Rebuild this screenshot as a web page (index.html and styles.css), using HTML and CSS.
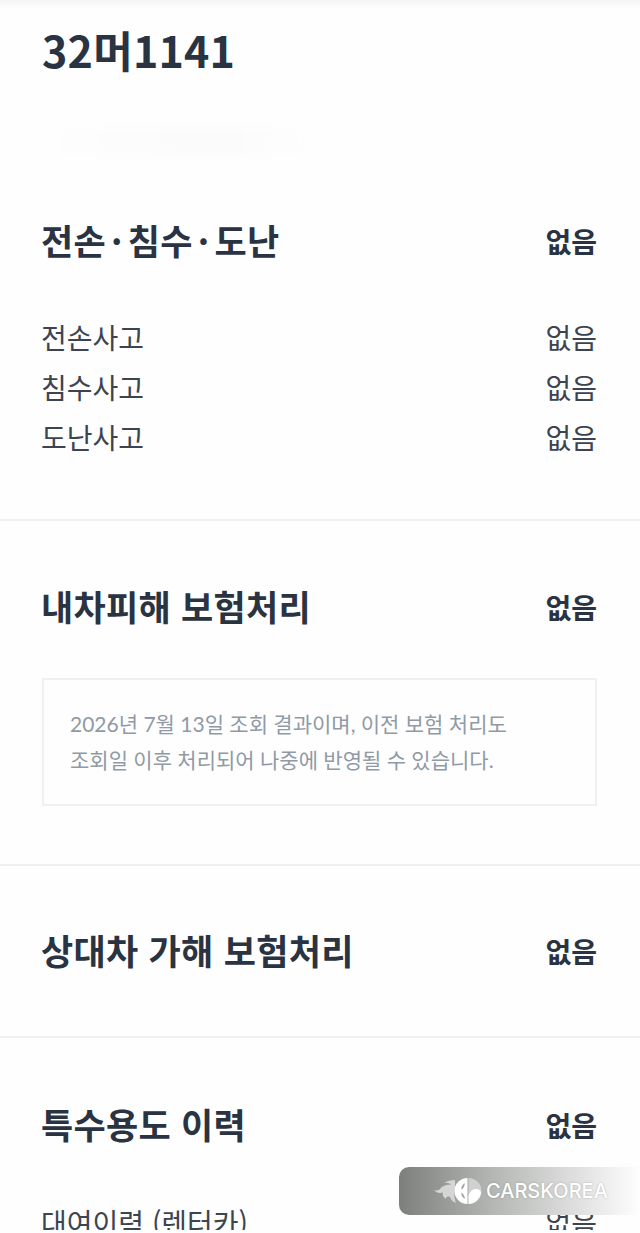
FILE: index.html
```html
<!DOCTYPE html>
<html lang="ko">

<head>
    <meta charset="UTF-8">
    <meta name="viewport" content="width=device-width, initial-scale=1.0">
    <title>32머1141</title>
    <link rel="stylesheet" href="styles.css">
</head>

<body>
    <div class="page">
        <div class="top-smudge"></div>
        <header class="head">
            <h1 class="plate">32머1141</h1>
            <div class="smudge"></div>
        </header>

        <section class="block block-first">
            <div class="block-head">
                <h2>전손<span class="dot">·</span>침수<span class="dot">·</span>도난</h2>
                <strong>없음</strong>
            </div>
            <ul class="rows">
                <li><span>전손사고</span><span>없음</span></li>
                <li><span>침수사고</span><span>없음</span></li>
                <li><span>도난사고</span><span>없음</span></li>
            </ul>
        </section>

        <section class="block block-own">
            <div class="block-head">
                <h2>내차피해 보험처리</h2>
                <strong>없음</strong>
            </div>
            <div class="note">
                <p>2026년 7월 13일 조회 결과이며, 이전 보험 처리도</p>
                <p>조회일 이후 처리되어 나중에 반영될 수 있습니다.</p>
            </div>
        </section>

        <section class="block block-other">
            <div class="block-head">
                <h2>상대차 가해 보험처리</h2>
                <strong>없음</strong>
            </div>
        </section>

        <section class="block block-special">
            <div class="block-head">
                <h2>특수용도 이력</h2>
                <strong>없음</strong>
            </div>
            <ul class="rows">
                <li><span>대여이력 (렌터카)</span><span>없음</span></li>
            </ul>
        </section>

        <div class="mark">
            <svg class="mark-logo" width="50" height="30" viewBox="0 0 50 30">
                <path class="flame" d="M21 4C17 4 13 5 10 7c4-.5 6 .5 7 2-4-1-9 1-11 4-1 1.500-4 2-6 1 2 3 6 3.500 9 2.500-1 2 0 4.500 3 6.500 0-2.500 2-3 4-2 1 3 3 5 6 6-2-5-2-9-1-15 0-3 0-6 0-8z" />
                <path class="disc" fill-rule="evenodd" d="M33.500 2a13 13 0 0 0 0 26zM31 7c-3 2-4 4-3.500 6.500 1.500-1 3-2.500 3.500-6.500zM31 23c-3-2-4-4-3.500-6.500 1.500 1 3 2.500 3.500 6.500z" />
                <path class="disc-back" d="M34.500 2a13 13 0 0 1 0 26z" />
                <path class="disc" d="M34.500 20c1-4 4-7 7-7s5.500 1.500 5.500 4c-1 6-6 10.500-12.500 11z" />
            </svg>
            <span class="mark-name">CARSKOREA</span>
        </div>
    </div>
</body>

</html>
```

FILE: styles.css
```css
* {
    margin: 0;
    padding: 0;
    box-sizing: border-box;
}

html,
body {
    height: 100%;
    background-color: #fefefe;
}

body {
    overflow: hidden;
    font-family: "Noto Sans CJK KR", "Noto Sans", sans-serif;
    color: #2a3342;
}

ul {
    list-style: none;
}

.page {
    position: relative;
    width: 640px;
    height: 1230px;
    overflow: hidden;
}

.top-smudge {
    position: absolute;
    top: 0;
    left: 0;
    width: 100%;
    height: 9px;
    background: linear-gradient(#f4f5f5, #fefefe);
}

.head {
    height: 176px;
    padding: 21px 42px 0;
}

.plate {
    font-size: 43px;
    line-height: 56px;
    font-weight: 700;
    letter-spacing: 0.2px;
}

.smudge {
    width: 270px;
    height: 26px;
    margin-top: 52px;
    background: linear-gradient(90deg, #fefefe, #fcfcfc 30%, #fbfbfb 70%, #fefefe);
    filter: blur(4px);
}

.block {
    padding: 60px 43px 58px 41px;
    border-top: 2px solid #eef0f1;
}

.block-first {
    padding-top: 39px;
    padding-bottom: 57px;
    border-top: 0;
}

.block-other {
    padding-top: 59px;
    padding-bottom: 63px;
}

.block-special {
    padding-top: 61px;
}

.block-head {
    display: flex;
    justify-content: space-between;
    align-items: center;
    height: 48px;
}

.block-head h2 {
    font-size: 35px;
    font-weight: 700;
    letter-spacing: 0.3px;
}

.dot {
    padding: 0 5px;
}

.block-head strong {
    padding-top: 3px;
    font-size: 28px;
    font-weight: 700;
}

.rows {
    margin-top: 49px;
    font-size: 28px;
    font-weight: 400;
    color: #3c4450;
}

.block-special .rows {
    margin-top: 50px;
}

.rows li {
    display: flex;
    justify-content: space-between;
    align-items: center;
    height: 50px;
}

.note {
    margin: 49px 0 0 1px;
    padding: 26px 26px;
    border: 2px solid #eef1f3;
    font-family: Lato, "Noto Sans CJK KR", sans-serif;
    font-size: 21px;
    line-height: 36px;
    color: #8f9aa6;
}

.block-own {
    padding-bottom: 58px;
}

.mark {
    position: absolute;
    top: 1167px;
    left: 399px;
    display: flex;
    align-items: center;
    gap: 2px;
    width: 241px;
    height: 48px;
    padding-left: 35px;
    border-radius: 10px 0 0 10px;
    background: linear-gradient(90deg, #7d7f7d, #b6b8b6 40%, #fefefe);
}

.mark-logo {
    flex: none;
}

.flame {
    fill: #d4d5d4;
}

.disc {
    fill: #fff;
}

.disc-back {
    fill: #cfd0cf;
}

.mark-name {
    font-family: Inter, "Liberation Sans", sans-serif;
    font-size: 20px;
    font-weight: 500;
    color: #fff;
    text-shadow: 0 0 2px rgba(0, 0, 0, 0.25);
}
```
